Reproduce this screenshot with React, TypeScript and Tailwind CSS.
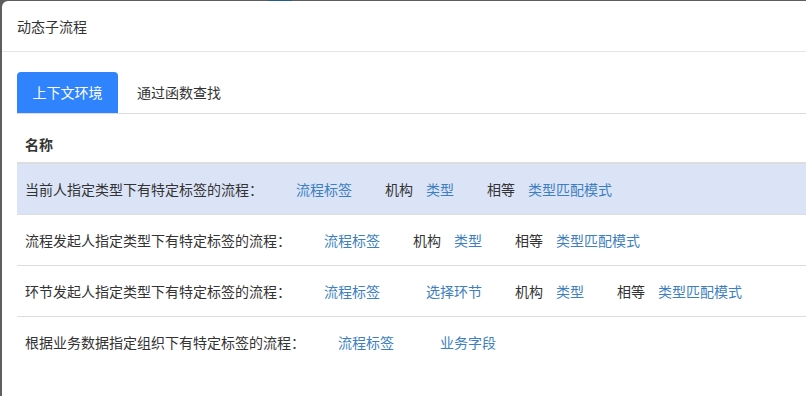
import React from "react";

type Part = { text: string; link?: boolean; gap: number };

const rows: { label: string; parts: Part[]; active?: boolean }[] = [
  {
    label: "当前人指定类型下有特定标签的流程：",
    active: true,
    parts: [
      { text: "流程标签", link: true, gap: 33 },
      { text: "机构", gap: 33 },
      { text: "类型", link: true, gap: 13 },
      { text: "相等", gap: 33 },
      { text: "类型匹配模式", link: true, gap: 13 },
    ],
  },
  {
    label: "流程发起人指定类型下有特定标签的流程：",
    parts: [
      { text: "流程标签", link: true, gap: 33 },
      { text: "机构", gap: 33 },
      { text: "类型", link: true, gap: 13 },
      { text: "相等", gap: 33 },
      { text: "类型匹配模式", link: true, gap: 13 },
    ],
  },
  {
    label: "环节发起人指定类型下有特定标签的流程：",
    parts: [
      { text: "流程标签", link: true, gap: 33 },
      { text: "选择环节", link: true, gap: 46 },
      { text: "机构", gap: 33 },
      { text: "类型", link: true, gap: 13 },
      { text: "相等", gap: 33 },
      { text: "类型匹配模式", link: true, gap: 13 },
    ],
  },
  {
    label: "根据业务数据指定组织下有特定标签的流程：",
    parts: [
      { text: "流程标签", link: true, gap: 33 },
      { text: "业务字段", link: true, gap: 46 },
    ],
  },
];

export default function App() {
  return (
    <div
      className="relative h-[396px] w-[806px] overflow-hidden bg-[#5e5e5e] pl-[2px] pt-px text-[14px] text-[#333]"
      style={{ fontFamily: '"Noto Sans CJK SC", "Noto Sans", sans-serif' }}
    >
      <div className="absolute left-[268px] top-0 h-px w-[24px] bg-[#1f5f86]" />
      <div className="h-[420px] w-[840px] rounded-tl-[6px] bg-white">
        {/* header */}
        <div className="flex h-[51px] items-center border-b border-[#e5e5e5] pl-[15px]">
          <span className="leading-5">动态子流程</span>
        </div>

        <div className="px-[15px] pt-[20px]">
          {/* tabs */}
          <div className="flex border-b border-[#ddd]">
            <div className="flex h-[41px] w-[101px] items-center justify-center rounded-t-[4px] bg-[#2f84fe] text-white">
              上下文环境
            </div>
            <div className="flex h-[41px] items-center pl-[19px]">通过函数查找</div>
          </div>

          {/* table */}
          <div className="mt-[12px]">
            <div className="border-b-2 border-[#ddd] px-2 py-2 font-bold leading-5">名称</div>
            {rows.map((r, i) => (
              <div
                key={i}
                className={
                  "flex items-center px-2 py-[15px] leading-5 " +
                  (i > 0 ? "border-t border-[#ddd] " : "") +
                  (r.active ? "bg-[#dbe4f7]" : "")
                }
              >
                <span>{r.label}</span>
                {r.parts.map((p, j) => (
                  <span
                    key={j}
                    className={p.link ? "text-[#3d7fc1]" : ""}
                    style={{ marginLeft: p.gap }}
                  >
                    {p.text}
                  </span>
                ))}
              </div>
            ))}
          </div>
        </div>
      </div>
    </div>
  );
}
